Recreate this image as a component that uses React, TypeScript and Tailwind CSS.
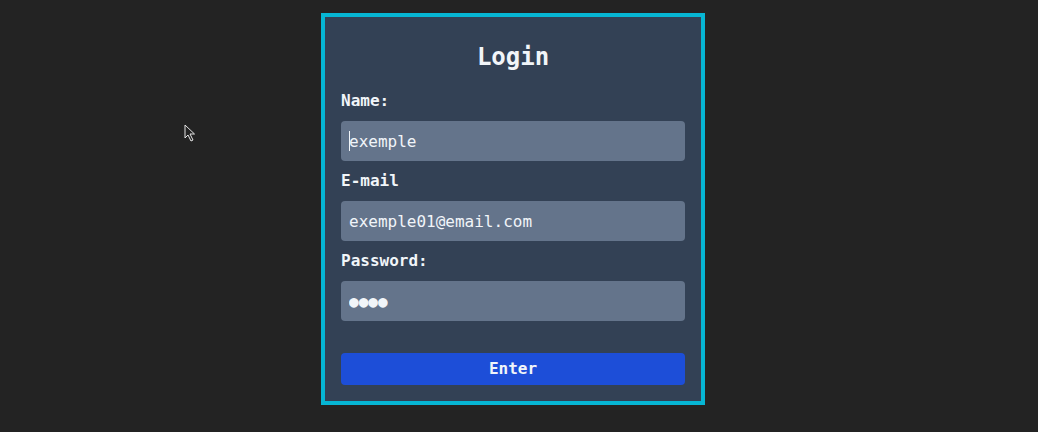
import { useState } from "react";

const mono = { fontFamily: '"DejaVu Sans Mono", "Liberation Mono", monospace' };

const Field = ({
  label,
  value,
  onChange,
  caret = false,
}: {
  label: string;
  value: string;
  onChange: (v: string) => void;
  caret?: boolean;
}) => (
  <div className="flex flex-col gap-2">
    <label className="font-bold text-base leading-6 text-slate-100">{label}</label>
    <div className="relative">
      <input
        type="text"
        value={value}
        onChange={(e) => onChange(e.target.value)}
        className="w-full h-10 px-2 rounded bg-[#64748b] text-slate-100 text-base outline-none"
        style={mono}
      />
      {caret && <span className="absolute left-2 top-[10px] h-5 w-px bg-slate-100" />}
    </div>
  </div>
);

const App = () => {
  const [name, setName] = useState("exemple");
  const [email, setEmail] = useState("exemple01@email.com");
  const [password, setPassword] = useState("1234");

  // shown as big discs, like the browser in the screenshot
  const masked = "●".repeat(password.length);
  const onPassword = (v: string) => {
    if (v.length < password.length) setPassword(password.slice(0, v.length));
    else setPassword(password + v.slice(password.length).replace(/●/g, ""));
  };

  return (
    <div className="relative min-h-screen bg-[#232323] flex justify-center pt-[13px] pr-3" style={mono}>
      {/* mouse pointer from the screenshot */}
      <svg className="absolute left-[184px] top-[124px]" width="12" height="18" viewBox="0 0 12 18">
        <path d="M1 1 L1 14 L4 11 L7 17 L9 16 L6 10 L10.5 10 Z" fill="#232323" stroke="#e5e5e5" strokeWidth="1" />
      </svg>

      <form
        className="w-96 h-[392px] border-4 border-[#06b6d4] bg-[#334155] px-4 pt-6 pb-4 flex flex-col"
        onSubmit={(e) => e.preventDefault()}
      >
        <h1 className="text-2xl leading-8 font-bold text-center text-slate-100 mb-4">Login</h1>
        <div className="flex flex-col gap-2">
          <Field label="Name:" value={name} onChange={setName} caret />
          <Field label="E-mail" value={email} onChange={setEmail} />
          <Field label="Password:" value={masked} onChange={onPassword} />
        </div>
        <button
          type="submit"
          className="mt-8 h-8 w-full rounded bg-[#1d4ed8] text-slate-100 font-bold text-base"
        >
          Enter
        </button>
      </form>
    </div>
  );
};

export default App;
